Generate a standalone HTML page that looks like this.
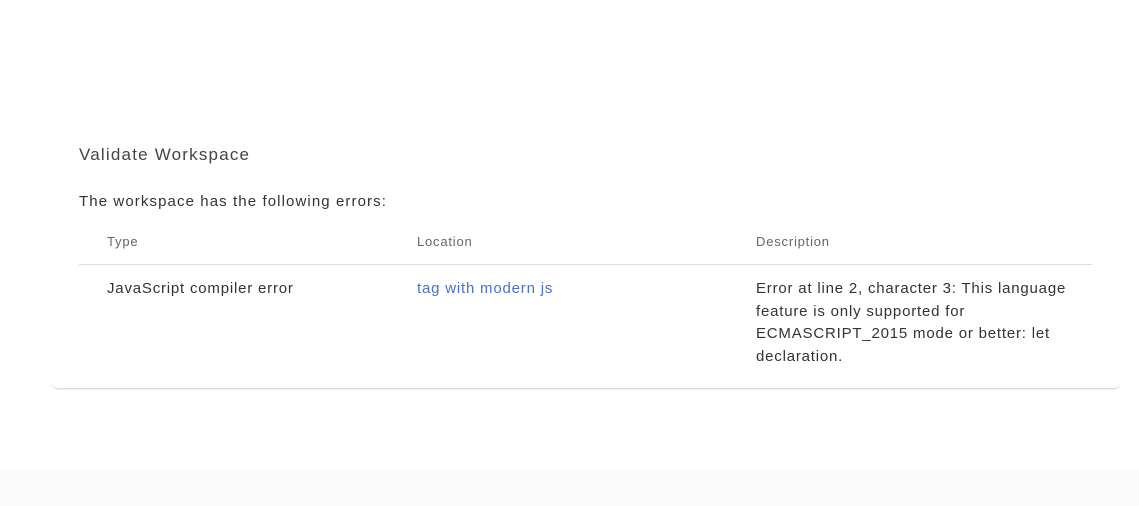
<!DOCTYPE html>
<html><head><style>
body{margin:0;width:1139px;height:506px;background:#fff;font-family:"Liberation Sans",sans-serif;position:relative;overflow:hidden}
.bot{position:absolute;left:0;top:470px;width:1139px;height:36px;background:#fafafa}
.card{position:absolute;left:52px;top:120px;width:1068px;height:268px;border-bottom:1px solid #dcdcdc;border-radius:0 0 6px 6px;box-shadow:0 1px 1px rgba(0,0,0,0.06)}
.t{position:absolute;white-space:nowrap;color:#3c4043}
.line{position:absolute;left:79px;top:264px;width:1013px;height:1px;background:#dadce0}
.h{font-size:13px;letter-spacing:0.8px;color:#666}
.r{font-size:15px;letter-spacing:0.8px;color:#333}
</style></head><body>
<div class="bot"></div>
<div class="card"></div>
<div class="t" style="left:79px;top:145px;font-size:17px;letter-spacing:1.2px;color:#444">Validate Workspace</div>
<div class="t r" style="left:79px;top:193px;letter-spacing:1.1px">The workspace has the following errors:</div>
<div class="t h" style="left:107px;top:234px">Type</div>
<div class="t h" style="left:417px;top:234px">Location</div>
<div class="t h" style="left:756px;top:234px">Description</div>
<div class="line"></div>
<div class="t r" style="left:107px;top:280px">JavaScript compiler error</div>
<div class="t r" style="left:417px;top:280px;color:#4a6fd0">tag with modern js</div>
<div class="t r" style="left:756px;top:278px;line-height:22.5px;white-space:normal;width:320px">Error at line 2, character 3: This language feature is only supported for ECMASCRIPT_2015 mode or better: let declaration.</div>
</body></html>
